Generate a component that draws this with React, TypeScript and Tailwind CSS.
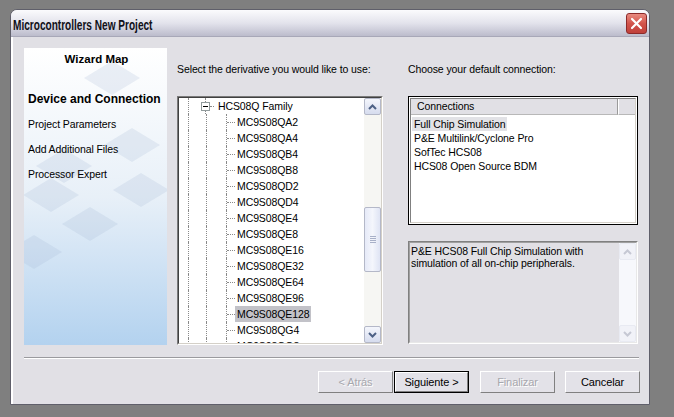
import React from 'react';

const devices = [
  'MC9S08QA2',
  'MC9S08QA4',
  'MC9S08QB4',
  'MC9S08QB8',
  'MC9S08QD2',
  'MC9S08QD4',
  'MC9S08QE4',
  'MC9S08QE8',
  'MC9S08QE16',
  'MC9S08QE32',
  'MC9S08QE64',
  'MC9S08QE96',
  'MC9S08QE128',
  'MC9S08QG4',
  'MC9S08QG8',
];

const connections = [
  'Full Chip Simulation',
  'P&E Multilink/Cyclone Pro',
  'SofTec HCS08',
  'HCS08 Open Source BDM',
];

const steps = ['Project Parameters', 'Add Additional Files', 'Processor Expert'];

// faint diamonds on the wizard map panel
const diamonds = [
  [88, 30],
  [108, 97],
  [40, 118],
  [27, 147],
  [117, 142],
  [66, 176],
  [10, 204],
];

const Chevron = ({ up, disabled }: { up?: boolean; disabled?: boolean }) => (
  <svg width="9" height="6" viewBox="0 0 9 6">
    <path
      d={up ? 'M1 5 L4.5 1.5 L8 5' : 'M1 1 L4.5 4.5 L8 1'}
      fill="none"
      stroke={disabled ? '#c6c8d4' : '#4d6185'}
      strokeWidth="2"
    />
  </svg>
);

const ScrollButton = ({ up, disabled }: { up?: boolean; disabled?: boolean }) => (
  <div
    className={`h-[17px] w-[17px] rounded-[2px] border flex items-center justify-center ${
      disabled
        ? 'border-[#e8eaf2] bg-[#f1f2f8]'
        : 'border-[#b4b8c8] bg-gradient-to-b from-[#f4f6fc] to-[#d6dcee]'
    }`}
  >
    <Chevron up={up} disabled={disabled} />
  </div>
);

const WinButton = ({ label, disabled, isDefault }: { label: string; disabled?: boolean; isDefault?: boolean }) => (
  <div className={`h-[22px] w-[75px] ${isDefault ? 'border border-black' : ''}`}>
    <div
      className={`h-full w-full flex items-center justify-center text-[11px] border-t border-l border-white border-b border-r border-b-[#808080] border-r-[#808080] bg-[#e3e2e8] ${
        disabled ? 'text-[#a7a7ad] [text-shadow:1px_1px_0_#ffffff]' : 'text-black'
      }`}
    >
      {label}
    </div>
  </div>
);

export default function App() {
  return (
    <div className="w-[674px] h-[417px] bg-[#7f7f7f] pt-[9px] pl-[10px] font-['Liberation_Sans',Tahoma,sans-serif] text-[10.5px] tracking-[-0.1px] leading-none text-black">
      <div className="w-[640px] h-[396px] rounded-t-[7px] border border-[#5f5f6a] bg-[#e1e0e5] flex flex-col overflow-hidden">
        {/* Title bar */}
        <div className="h-[27px] shrink-0 flex items-center justify-between pl-[2px] pr-[2px] bg-gradient-to-b from-[#fbfbfd] via-[#e3e3ec] to-[#bcbccc] border-b border-[#a8a8b8]">
          <span className="inline-block origin-left scale-x-[0.72] pt-[3px] font-bold text-[14px] tracking-normal text-[#101018] whitespace-nowrap">
            Microcontrollers New Project
          </span>
          <div className="h-[21px] w-[21px] rounded-[3px] border border-[#8c2a2a] bg-gradient-to-b from-[#e88a80] via-[#d2544c] to-[#c0403a] flex items-center justify-center">
            <svg width="13" height="13" viewBox="0 0 13 13">
              <path d="M2 2 L11 11 M11 2 L2 11" stroke="#ffffff" strokeWidth="2.2" strokeLinecap="round" />
            </svg>
          </div>
        </div>

        {/* Body */}
        <div className="flex-1 flex flex-col border-l-2 border-l-white">
          <div className="flex pl-[11px] pt-[11px]">
            {/* Wizard map */}
            <div className="relative w-[143px] h-[297px] bg-gradient-to-b from-white via-[#e8f0f8] to-[#b3d2ef] overflow-hidden">
              <svg className="absolute inset-0" width="143" height="297">
                {diamonds.map(([cx, cy], i) => (
                  <polygon
                    key={i}
                    points={`${cx - 28},${cy} ${cx},${cy - 17} ${cx + 28},${cy} ${cx},${cy + 17}`}
                    fill="#9fb6d0"
                    opacity="0.2"
                  />
                ))}
              </svg>
              <div className="relative flex flex-col pl-[4px] pt-[6px]">
                <div className="text-center font-bold text-[11.5px] tracking-normal pr-[2px]">Wizard Map</div>
                <div className="mt-[27px] font-bold text-[12px] tracking-normal">Device and Connection</div>
                {steps.map((s) => (
                  <div key={s} className="mt-[14.5px]">
                    {s}
                  </div>
                ))}
              </div>
            </div>

            {/* Derivative tree */}
            <div className="ml-[10px] w-[206px] flex flex-col">
              <div className="h-[48px] pt-[16px] whitespace-nowrap">Select the derivative you would like to use:</div>
              <div className="h-[249px] border border-[#7a7a7a] border-r-white border-b-white">
                <div className="h-full border border-[#404040] border-r-[#d4d0c8] border-b-[#d4d0c8] bg-white flex">
                  <div className="flex-1 overflow-hidden">
                    <div className="flex h-[16px]">
                      <div className="w-[9px]" />
                      <div className="w-[18px] border-l border-dotted border-[#8a8a8a]" />
                      <div className="relative w-[19px] flex items-center">
                        <div className="absolute left-[-1px] top-0 h-full border-l border-dotted border-[#8a8a8a]" />
                        <div className="relative -ml-[5px] h-[9px] w-[9px] border border-[#919b9c] bg-white flex items-center justify-center">
                          <div className="w-[5px] h-px bg-black" />
                        </div>
                        <div className="w-[4px] border-t border-dotted border-[#8a8a8a]" />
                      </div>
                      <span className="pl-[1px] pt-[3px] -ml-[8px]">HCS08Q Family</span>
                    </div>
                    {devices.map((d) => (
                      <div key={d} className="flex h-[16px]">
                        <div className="w-[9px]" />
                        <div className="w-[18px] border-l border-dotted border-[#8a8a8a]" />
                        <div className="w-[20px] border-l border-dotted border-[#8a8a8a]" />
                        <div className="w-[9px] border-l border-dotted border-[#8a8a8a] flex items-center">
                          <div className="w-[8px] border-t border-dotted border-[#8a8a8a]" />
                        </div>
                        <span
                          className={`h-[16px] px-[2px] flex items-center ${
                            d === 'MC9S08QE128' ? 'bg-[#c2c2c8]' : ''
                          }`}
                        >
                          {d}
                        </span>
                      </div>
                    ))}
                  </div>
                  {/* scrollbar */}
                  <div className="w-[17px] bg-[#f6f6f3] flex flex-col">
                    <ScrollButton up />
                    <div className="h-[92px]" />
                    <div className="h-[65px] w-[17px] rounded-[2px] border border-[#b4b8c8] bg-gradient-to-r from-[#e6eaf8] via-[#f4f6fc] to-[#dfe4f4] flex flex-col items-center justify-center gap-[1px]">
                      {[0, 1, 2, 3].map((i) => (
                        <div key={i} className="w-[6px] h-px bg-[#a8b0c8]" />
                      ))}
                    </div>
                    <div className="flex-1" />
                    <ScrollButton />
                  </div>
                </div>
              </div>
            </div>

            {/* Connections */}
            <div className="ml-[25px] w-[230px] flex flex-col">
              <div className="h-[48px] pt-[16px]">Choose your default connection:</div>
              <div className="h-[129px] border border-black bg-white p-px">
                <div className="h-full border border-[#808080] border-r-[#d4d0c8] border-b-[#d4d0c8] flex flex-col">
                  <div className="h-[16px] flex bg-[#e1e0e5]">
                    <div className="w-[207px] border-r border-r-[#9a9a9a] border-b border-b-[#b8b8b8] pl-[6px] flex items-center">
                      Connections
                    </div>
                    <div className="flex-1 border-l border-white border-b border-b-[#b8b8b8]" />
                  </div>
                  <div className="pt-[2px] pl-[1px] flex flex-col">
                    {connections.map((c, i) => (
                      <div key={c} className="h-[14px] flex">
                        <span className={`px-[2px] flex items-center ${i === 0 ? 'bg-[#e2e2e6]' : ''}`}>{c}</span>
                      </div>
                    ))}
                  </div>
                </div>
              </div>
              <div className="mt-[16px] h-[103px] border border-[#808080] border-r-white border-b-white">
                <div className="h-full border border-[#a0a0a0] border-r-[#e8e8e8] border-b-[#e8e8e8] bg-[#e1e0e5] flex">
                  <div className="flex-1 pl-[1px] pt-[2px] leading-[12px]">
                    P&amp;E HCS08 Full Chip Simulation with
                    <br />
                    simulation of all on-chip peripherals.
                  </div>
                  <div className="w-[17px] bg-[#f7f8fc] flex flex-col justify-between">
                    <ScrollButton up disabled />
                    <ScrollButton disabled />
                  </div>
                </div>
              </div>
            </div>
          </div>

          {/* Separator */}
          <div className="ml-[11px] mt-[12px] w-[615px] border-t border-[#9a9a9e] border-b border-b-white" />

          {/* Buttons */}
          <div className="mt-[12px] flex pl-[305px]">
            <WinButton label="< Atrás" disabled />
            <div className="ml-px">
              <WinButton label="Siguiente >" isDefault />
            </div>
            <div className="ml-[11px]">
              <WinButton label="Finalizar" disabled />
            </div>
            <div className="ml-[10px]">
              <WinButton label="Cancelar" />
            </div>
          </div>
        </div>
      </div>
    </div>
  );
}
